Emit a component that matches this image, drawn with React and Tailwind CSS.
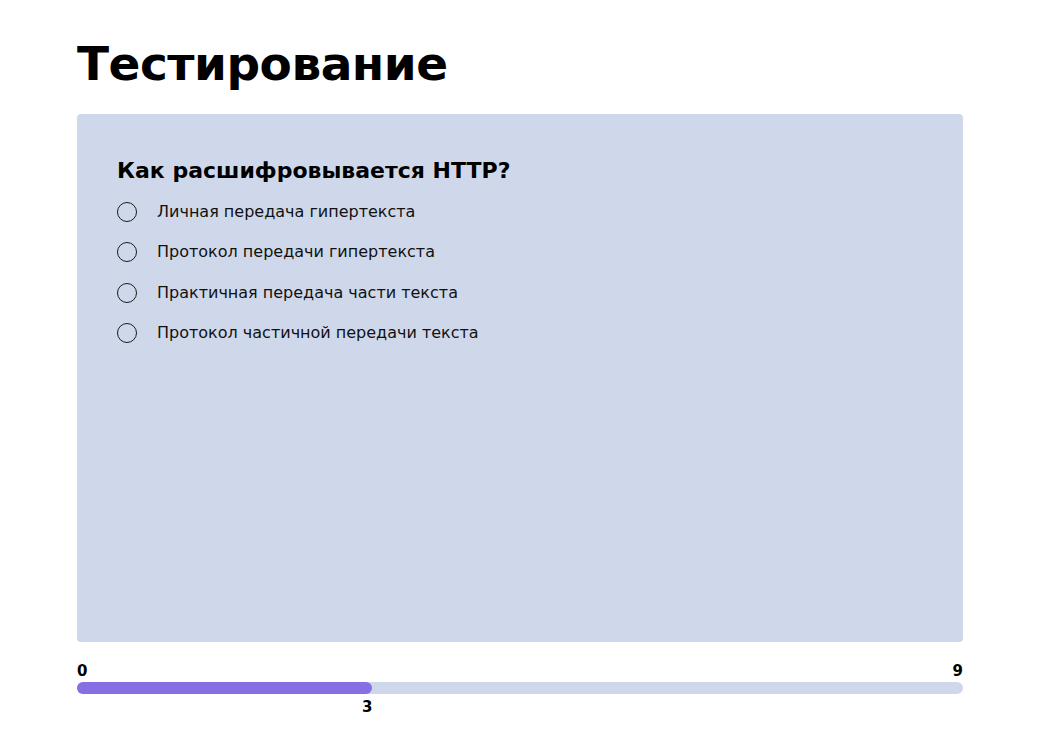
import React from 'react';

const OPTIONS = [
  'Личная передача гипертекста',
  'Протокол передачи гипертекста',
  'Практичная передача части текста',
  'Протокол частичной передачи текста',
];

export default function App() {
  const current = 3;
  const total = 9;
  const pct = (current / total) * 100;

  return (
    <div className="min-h-screen bg-white text-black" style={{ fontFamily: '"DejaVu Sans", sans-serif' }}>
      <div className="ml-[77px] w-[886px] pt-[34px]">
        <h1 className="text-[47px] leading-[60px] font-extrabold tracking-[-0.5px]">Тестирование</h1>

        <div className="mt-[20px] h-[528px] rounded-[4px] bg-[#cfd8eb] px-10 pt-[42px]">
          <h2 className="text-[22px] leading-[30px] font-bold">Как расшифровывается HTTP?</h2>
          <ul className="mt-[16px] flex flex-col gap-[20.3px]">
            {OPTIONS.map(opt => (
              <li key={opt} className="flex items-center gap-5 h-[20px]">
                <span className="w-5 h-5 rounded-full border-[1.5px] border-[#1a1a1a] shrink-0" />
                <span className="text-[16px] text-[#111]">{opt}</span>
              </li>
            ))}
          </ul>
        </div>

        <div className="mt-[20px]">
          <div className="flex justify-between text-[15px] font-bold leading-[18px]">
            <span>0</span>
            <span>{total}</span>
          </div>
          <div className="mt-[2px] h-3 rounded-full bg-[#cfd8eb]">
            <div className="h-3 rounded-full bg-[#866ee3]" style={{ width: `${pct}%` }} />
          </div>
          <div className="relative h-[20px]">
            <span className="absolute top-[2px] -translate-x-1/2 text-[15px] font-bold" style={{ left: `calc(${pct}% - 5px)` }}>
              {current}
            </span>
          </div>
        </div>
      </div>
    </div>
  );
}
